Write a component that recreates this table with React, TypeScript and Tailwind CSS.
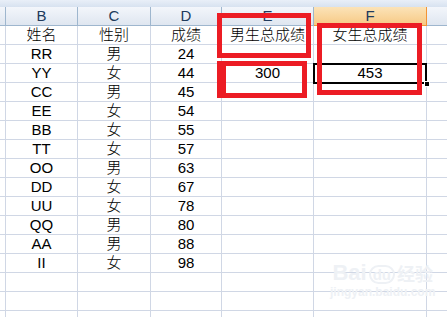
const rows: [string, string, string, string, string][] = [
  ["姓名", "性别", "成绩", "男生总成绩", "女生总成绩"],
  ["RR", "男", "24", "", ""],
  ["YY", "女", "44", "300", "453"],
  ["CC", "男", "45", "", ""],
  ["EE", "女", "54", "", ""],
  ["BB", "女", "55", "", ""],
  ["TT", "女", "57", "", ""],
  ["OO", "男", "63", "", ""],
  ["DD", "女", "67", "", ""],
  ["UU", "女", "78", "", ""],
  ["QQ", "男", "80", "", ""],
  ["AA", "男", "88", "", ""],
  ["II", "女", "98", "", ""],
  ["", "", "", "", ""],
  ["", "", "", "", ""],
  ["", "", "", "", ""],
];

const font = { fontFamily: '"Liberation Sans", "Noto Sans CJK SC", sans-serif' };

export default function App() {
  return (
    <div
      className="relative w-[447px] h-[317px] overflow-hidden bg-white text-black"
      style={font}
    >
      {/* top strip */}
      <div className="h-[7px] bg-gradient-to-b from-[#e9eff8] to-[#d7e2f0]" />

      {/* column headers */}
      <div className="grid grid-cols-[6px_72px_73px_71px_92px_113px_1fr] h-[19px] text-[15px] leading-[18px] text-[#203a5c]">
        <div className="border-r border-b border-[#9eb6ce] bg-gradient-to-b from-[#f3f6fb] to-[#dfe6f0]" />
        <div className="border-r border-b border-[#9eb6ce] bg-gradient-to-b from-[#f3f6fb] to-[#dfe6f0] text-center">B</div>
        <div className="border-r border-b border-[#9eb6ce] bg-gradient-to-b from-[#f3f6fb] to-[#dfe6f0] text-center">C</div>
        <div className="border-r border-b border-[#9eb6ce] bg-gradient-to-b from-[#f3f6fb] to-[#dfe6f0] text-center">D</div>
        <div className="border-r border-b border-[#9eb6ce] bg-gradient-to-b from-[#f3f6fb] to-[#dfe6f0] text-center">E</div>
        <div className="border-r border-b border-[#f29436] bg-gradient-to-b from-[#fbe3b8] to-[#f7c984] text-center">F</div>
        <div className="border-b border-[#9eb6ce] bg-gradient-to-b from-[#f3f6fb] to-[#dfe6f0]" />
      </div>

      {/* cells */}
      {rows.map((r, i) => (
        <div
          key={i}
          className="grid grid-cols-[6px_72px_73px_71px_92px_113px_1fr] h-[19px] text-[15px] leading-[18px]"
        >
          <div className="border-r border-b border-[#d0d7e5]" />
          {r.map((c, j) => (
            <div key={j} className="border-r border-b border-[#d0d7e5] text-center whitespace-nowrap font-light">
              {c}
            </div>
          ))}
          <div className="border-b border-[#d0d7e5]" />
        </div>
      ))}

      {/* selected cell */}
      <div className="absolute left-[313px] top-[63px] w-[114px] h-[21px] border-2 border-black" />
      <div className="absolute left-[424px] top-[81px] w-[6px] h-[6px] bg-black border border-white" />

      {/* red annotation boxes */}
      <div className="absolute left-[217px] top-[13px] w-[94px] h-[45px] border-[5px] border-[#ec1c24]" />
      <div className="absolute left-[217px] top-[61px] w-[90px] h-[37px] border-[5px] border-l-[9px] border-[#ec1c24]" />
      <div className="absolute left-[317px] top-[23px] w-[105px] h-[72px] border-[5px] border-[#ec1c24]" />

      {/* watermark */}
      <div className="absolute left-[330px] top-[262px] flex flex-col items-center text-[#eef1f5] pointer-events-none">
        <div className="flex items-end gap-[2px] leading-none">
          <span className="text-[22px] font-bold">Bai</span>
          <span className="text-[15px] font-bold rounded-full border-2 border-[#eef1f5] px-[2px]">du</span>
          <span className="text-[18px] font-bold">经验</span>
        </div>
        <div className="text-[12px] font-bold leading-[16px]">jingyan.baidu.com</div>
      </div>
    </div>
  );
}
